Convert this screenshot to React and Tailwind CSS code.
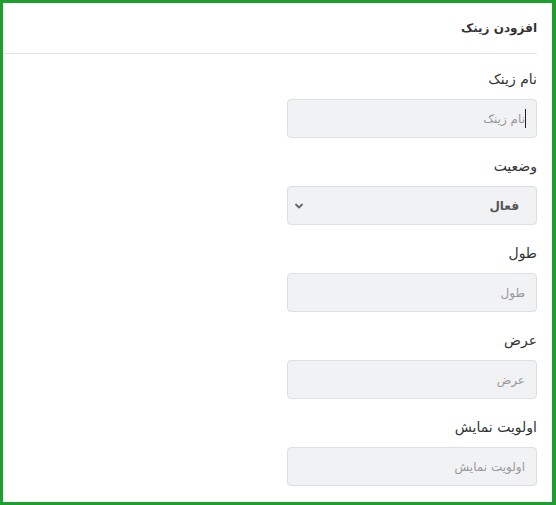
import React from 'react';

const fields = [
  { label: 'نام زینک', placeholder: 'نام زینک', caret: true },
  { label: 'وضعیت', select: true, value: 'فعال' },
  { label: 'طول', placeholder: 'طول' },
  { label: 'عرض', placeholder: 'عرض' },
  { label: 'اولویت نمایش', placeholder: 'اولویت نمایش' },
];

const Field = ({ field }) => {
  return (
    <div className="mb-[16px] flex flex-col items-start">
      <label className="mb-2 block h-6 text-[14px] leading-6 text-[#333]">{field.label}</label>
      {field.select ? (
        <div className="flex h-[39px] w-[250px] items-center justify-between rounded-[4px] border border-[#dcdfe3] bg-[#f1f2f4] pr-[17px] pl-[6px]">
          <span className="text-[12px] font-bold text-[#555]">{field.value}</span>
          <svg width="10" height="10" viewBox="0 0 10 10" className="text-[#666]">
            <path d="M2 3.5 L5 6.5 L8 3.5" fill="none" stroke="currentColor" strokeWidth="1.8" strokeLinecap="round" strokeLinejoin="round" />
          </svg>
        </div>
      ) : (
        <div className="relative h-[39px] w-[250px]">
          <input
            readOnly
            dir="rtl"
            placeholder={field.placeholder}
            className="h-full w-full rounded-[4px] border border-[#dcdfe3] bg-[#f1f2f4] pr-[11px] text-[12px] text-[#333] outline-none placeholder:text-[#999]"
          />
          {field.caret && <span className="absolute top-[10px] right-[11px] h-[19px] w-px bg-[#222]" />}
        </div>
      )}
    </div>
  );
};

const App = () => {
  return (
    <div
      dir="rtl"
      className="h-[505px] w-[556px] overflow-hidden border-[3px] border-r-4 border-[#1f9e30] bg-white"
      style={{ fontFamily: '"DejaVu Sans", sans-serif' }}
    >
      <div className="flex h-[50px] items-center pr-[15px]">
        <h1 className="text-[12px] font-bold text-[#333]">افزودن زینک</h1>
      </div>
      <div className="mr-[15px] h-px bg-[#e3e3e3]" />
      <form className="pt-[13px] pr-[15px]">
        {fields.map((field) => (
          <Field key={field.label} field={field} />
        ))}
      </form>
    </div>
  );
};

export default App;
